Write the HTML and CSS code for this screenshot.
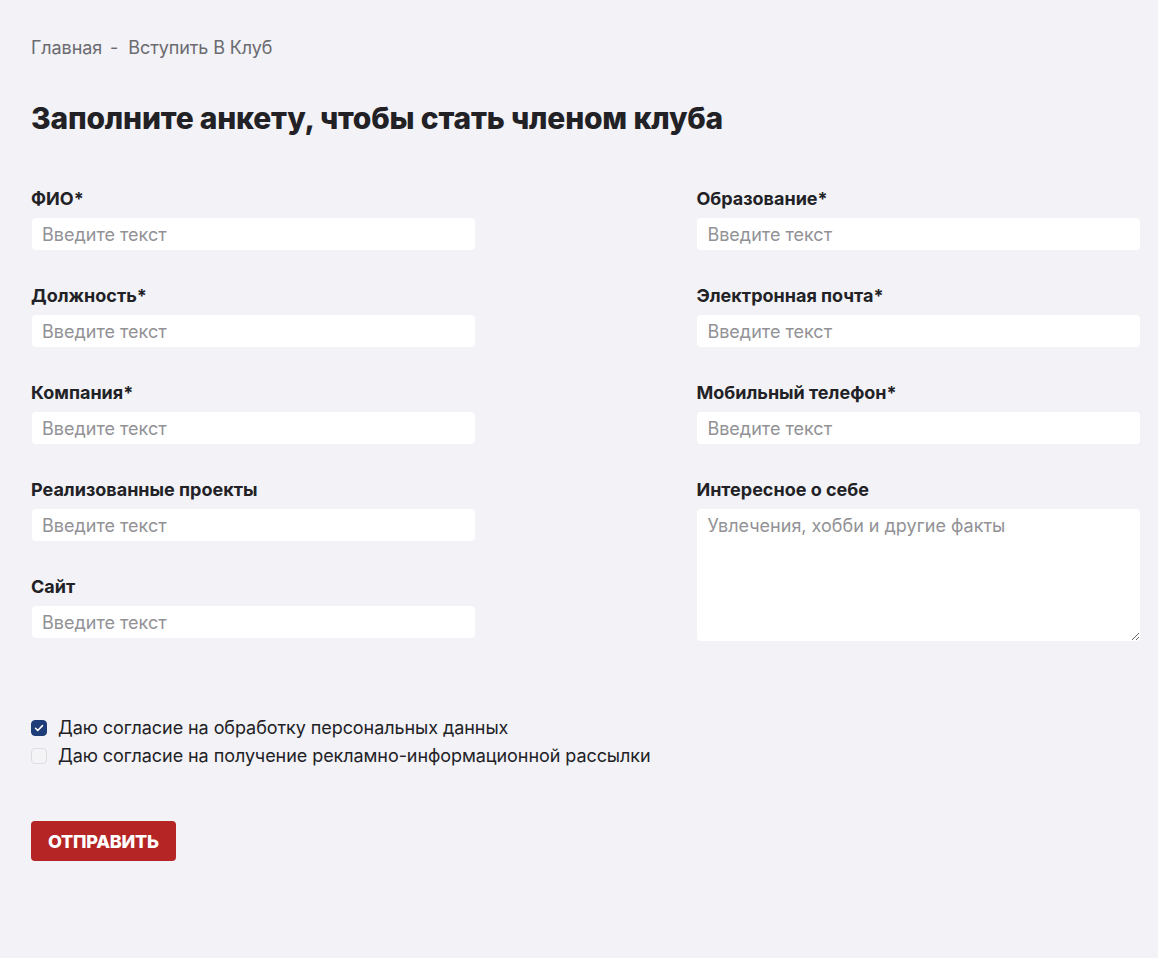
FILE: index.html
```html
<!DOCTYPE html>
<html lang="ru">
<head>
<meta charset="utf-8">
<title>Вступить в клуб</title>
<link rel="stylesheet" href="styles.css">
</head>
<body>
<main class="page">
  <nav class="crumbs"><span>Главная</span><span class="sep">-</span><span>Вступить В Клуб</span></nav>
  <h1 class="title">Заполните анкету, чтобы стать членом клуба</h1>
  <form class="form">
    <div class="cols">
      <div class="col">
        <label class="field"><span class="label">ФИО*</span><input class="input" type="text" placeholder="Введите текст"></label>
        <label class="field"><span class="label">Должность*</span><input class="input" type="text" placeholder="Введите текст"></label>
        <label class="field"><span class="label">Компания*</span><input class="input" type="text" placeholder="Введите текст"></label>
        <label class="field"><span class="label">Реализованные проекты</span><input class="input" type="text" placeholder="Введите текст"></label>
        <label class="field"><span class="label">Сайт</span><input class="input" type="text" placeholder="Введите текст"></label>
      </div>
      <div class="col">
        <label class="field"><span class="label">Образование*</span><input class="input" type="text" placeholder="Введите текст"></label>
        <label class="field"><span class="label">Электронная почта*</span><input class="input" type="text" placeholder="Введите текст"></label>
        <label class="field"><span class="label">Мобильный телефон*</span><input class="input" type="text" placeholder="Введите текст"></label>
        <label class="field"><span class="label">Интересное о себе</span><textarea class="input area" placeholder="Увлечения, хобби и другие факты"></textarea></label>
      </div>
    </div>
    <div class="checks">
      <label class="check"><input type="checkbox" class="box" checked><span>Даю согласие на обработку персональных данных</span></label>
      <label class="check"><input type="checkbox" class="box"><span>Даю согласие на получение рекламно-информационной рассылки</span></label>
    </div>
    <button type="button" class="submit">Отправить</button>
  </form>
</main>
</body>
</html>
```

FILE: styles.css
```css
html, body {
  margin: 0;
  padding: 0;
  background: #f2f2f7;
}
body {
  font-family: Inter, "Noto Sans", sans-serif;
  color: #222226;
  width: 1158px;
  height: 958px;
  overflow: hidden;
}
.page {
  padding: 38px 18px 0 31px;
}
.crumbs {
  font-size: 18px;
  line-height: 20px;
  color: #6b6b70;
  display: flex;
  letter-spacing: -0.1px;
}
.sep {
  margin: 0 10px 0 8px;
}
.title {
  margin: 42px 0 0;
  font-size: 30px;
  line-height: 36px;
  font-weight: 800;
  letter-spacing: -0.2px;
  color: #222226;
}
.form {
  margin-top: 52px;
}
.cols {
  display: flex;
  justify-content: space-between;
}
.col {
  width: 40%;
  display: flex;
  flex-direction: column;
  gap: 35px;
}
.field {
  display: flex;
  flex-direction: column;
  gap: 8px;
}
.label {
  font-size: 18px;
  line-height: 22px;
  font-weight: 700;
}
.input {
  box-sizing: border-box;
  width: calc(100% - 1px);
  margin-left: 1px;
  height: 32px;
  padding: 0 10px;
  border: none;
  border-radius: 4px;
  background: #fff;
  font-family: Inter, "Noto Sans", sans-serif;
  font-size: 18px;
  color: #222226;
  outline: none;
}
.input::placeholder {
  color: #929296;
}
.area {
  display: block;
  height: 132px;
  padding: 6px 10px;
  resize: vertical;
  line-height: 22px;
}
.checks {
  margin-top: 73px;
  display: flex;
  flex-direction: column;
}
.check {
  display: flex;
  align-items: center;
  gap: 11px;
  font-size: 18px;
  line-height: 28px;
  letter-spacing: -0.07px;
  color: #222226;
}
.box {
  appearance: none;
  -webkit-appearance: none;
  margin: 0;
  width: 16px;
  height: 16px;
  box-sizing: border-box;
  border: 1px solid #dddde2;
  border-radius: 4px;
  background: #f4f4f7;
}
.box:checked {
  border-color: #1e3c78;
  background: #1e3c78 url("data:image/svg+xml,%3Csvg xmlns='http://www.w3.org/2000/svg' viewBox='0 0 16 16'%3E%3Cpath d='M4 8.3l2.6 2.6L12 5.3' fill='none' stroke='white' stroke-width='1.8' stroke-linecap='round' stroke-linejoin='round'/%3E%3C/svg%3E") center/14px 14px no-repeat;
}
.submit {
  margin-top: 51px;
  height: 40px;
  padding: 0 17px;
  border: none;
  border-radius: 4px;
  background: #b52525;
  color: #fff;
  font-family: Inter, "Noto Sans", sans-serif;
  font-size: 18px;
  font-weight: 800;
  text-transform: uppercase;
  letter-spacing: -0.25px;
}
```
